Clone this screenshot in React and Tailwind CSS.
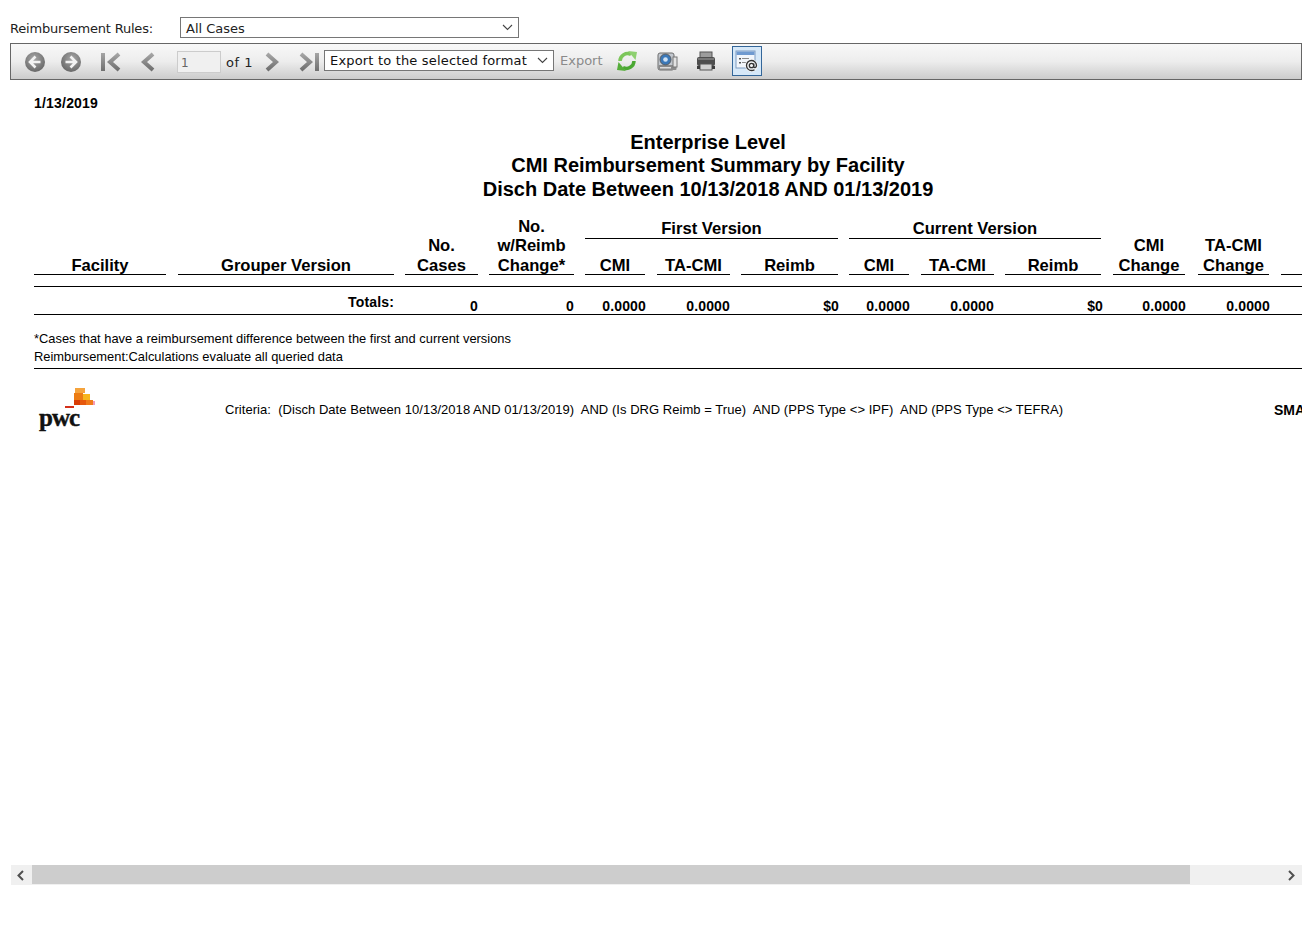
const Back = ({ flip }) => (
  <svg width="22" height="22" viewBox="0 0 22 22" className={flip ? "-scale-x-100" : ""}>
    <defs>
      <radialGradient id="cg" cx="0.45" cy="0.35" r="0.8">
        <stop offset="0" stopColor="#a8a8a8" />
        <stop offset="1" stopColor="#5a5a5a" />
      </radialGradient>
    </defs>
    <circle cx="11" cy="11" r="10" fill="url(#cg)" />
    <path d="M11.5 5.5 L6 11 L11.5 16.5 M6.5 11 H16.5" fill="none" stroke="#f2f2f2" strokeWidth="2.6" />
  </svg>
);

const Chev = ({ flip, bar, w = 22 }) => (
  <svg width={w} height="22" viewBox={`0 0 ${w} 22`} className={flip ? "-scale-x-100" : ""}>
    <defs>
      <linearGradient id="gg" x1="0" y1="0" x2="0" y2="1">
        <stop offset="0" stopColor="#a5a5a5" />
        <stop offset="1" stopColor="#6f6f6f" />
      </linearGradient>
    </defs>
    {bar && <rect x="0" y="2" width="4" height="18" fill="url(#gg)" />}
    <path d={bar ? "M18 3 L9 11 L18 19" : "M13 3 L4 11 L13 19"} fill="none" stroke="url(#gg)" strokeWidth="4" />
  </svg>
);

const Refresh = () => (
  <svg width="22" height="22" viewBox="0 0 22 22">
    <path d="M4 11 A7.5 7.5 0 0 1 15 4.5" fill="none" stroke="#7cc65a" strokeWidth="3.5" />
    <path d="M12 1 L21 2 L19.5 10 Z" fill="#8ed070" />
    <path d="M18 11 A7.5 7.5 0 0 1 7 17.5" fill="none" stroke="#4aa832" strokeWidth="3.5" />
    <path d="M10 21 L1 20 L2.5 12 Z" fill="#55ad3a" />
  </svg>
);

const Cam = () => (
  <svg width="22" height="22" viewBox="0 0 22 22">
    <rect x="2" y="3" width="16" height="17" rx="2" fill="#c3c8cf" stroke="#6d6d6d" />
    <rect x="2.5" y="15" width="18" height="5" rx="1" fill="#8a8a8a" />
    <rect x="17" y="7" width="4" height="10" fill="#e3e3e3" stroke="#777" />
    <circle cx="9.5" cy="9.5" r="5.5" fill="#3b78b8" stroke="#5b5b5b" />
    <circle cx="9.5" cy="9.5" r="2.3" fill="#cfe2f5" />
    <rect x="4" y="17" width="11" height="1.5" fill="#dddddd" />
  </svg>
);

const Printer = () => (
  <svg width="22" height="22" viewBox="0 0 22 22">
    <rect x="5" y="2" width="12" height="6" fill="#9c9c9c" stroke="#555" />
    <rect x="2" y="7" width="18" height="9" rx="2" fill="#4e4e4e" />
    <rect x="3" y="8" width="16" height="2" fill="#777" />
    <rect x="5" y="14" width="12" height="6" fill="#d2d2d2" stroke="#555" />
    <rect x="2" y="16" width="3" height="3" fill="#3e3e3e" />
    <rect x="17" y="16" width="3" height="3" fill="#3e3e3e" />
  </svg>
);

const Mail = () => (
  <svg width="24" height="24" viewBox="0 0 24 24">
    <rect x="1" y="2" width="19" height="17" fill="#f2f6fb" stroke="#7f9cc0" />
    <rect x="1.5" y="2.5" width="18" height="3.5" fill="#6f9ad0" />
    <rect x="4" y="9" width="2" height="1.5" fill="#555" />
    <rect x="7" y="9" width="7" height="1" fill="#8a8a8a" />
    <rect x="4" y="13" width="2" height="1.5" fill="#555" />
    <rect x="7" y="13" width="4" height="1" fill="#8a8a8a" />
    <circle cx="16.5" cy="16.5" r="6.5" fill="#f5f5f5" opacity="0.85" />
    <circle cx="16.5" cy="16.5" r="2.2" fill="none" stroke="#333" strokeWidth="1.3" />
    <path d="M18.7 14.5 V17.5 C18.7 19 21.5 19 21.5 16.5 C21.5 13 18.5 11.5 16.5 11.5 C13.5 11.5 11.5 14 11.5 16.5 C11.5 19.5 14 21.5 16.5 21.5 C17.7 21.5 18.7 21.2 19.5 20.7" fill="none" stroke="#333" strokeWidth="1.3" />
  </svg>
);

const Logo = () => (
  <div className="w-[60px] h-[46px] flex flex-col items-start">
    <svg width="60" height="23" viewBox="0 0 60 23" className="block">
      <rect x="36" y="0" width="10" height="5" fill="#f5a33c" />
      <rect x="35" y="5" width="9" height="7" fill="#ec7c12" />
      <rect x="44" y="6" width="7" height="6" fill="#f7b61c" />
      <rect x="35" y="12" width="6" height="5" fill="#d93c05" />
      <rect x="41" y="12" width="6" height="5" fill="#e6580d" />
      <rect x="47" y="12" width="7" height="5" fill="#f07a1a" />
      <rect x="54" y="13" width="2" height="4" fill="#f49ab8" />
      <rect x="26" y="18" width="9" height="2" fill="#d4301a" />
    </svg>
    <div className="font-['Liberation_Serif',serif] font-bold text-[25px] leading-[22px] tracking-[-1px] text-[#111] -mt-[4px] [-webkit-text-stroke:0.4px_#111]">pwc</div>
  </div>
);

const Head = ({ w, children, className = "" }) => (
  <div className={`${w} ${className} shrink-0 text-center border-b border-black leading-[19.5px]`}>
    <div className="-mb-[1px]">{children}</div>
  </div>
);

export default function App() {
  return (
    <div className="h-[937px] w-[1312px] overflow-hidden bg-white text-black font-['Liberation_Sans',Arial,sans-serif]">
      <div className="pl-[10px] pt-[17px] flex items-center h-[43px] pb-[5px] font-['DejaVu_Sans',Verdana,sans-serif] text-[13px] text-[#222]">
        <span className="w-[170px] tracking-[-0.2px] pt-[2px]">Reimbursement Rules:</span>
        <div className="w-[339px] h-[21px] border border-[#767676] bg-white flex items-center justify-between pl-[5px] pr-[5px]">
          <span className="pt-[2px]">All Cases</span>
          <svg width="11" height="7" viewBox="0 0 11 7"><path d="M1 1 L5.5 5.5 L10 1" fill="none" stroke="#444" strokeWidth="1.1" /></svg>
        </div>
      </div>

      <div className="ml-[10px] w-[1292px] h-[37px] border border-[#666] bg-gradient-to-b from-[#f8f8f8] via-[#ededed] to-[#cccccc] flex items-center pl-[13px] font-['DejaVu_Sans',Verdana,sans-serif] text-[13px]">
        <Back />
        <div className="w-[14px]" />
        <Back flip />
        <div className="w-[19px]" />
        <Chev bar />
        <div className="w-[17px]" />
        <Chev w={16} />
        <div className="w-[21px]" />
        <div className="w-[44px] h-[22px] border border-[#ccc] bg-[#f0f0f0] text-[#666] text-[12px] pl-[3px] pt-[2px] flex items-center">1</div>
        <span className="ml-[5px] w-[27px] text-[#222] mt-[2px] tracking-[0.5px]">of 1</span>
        <div className="w-[11px]" />
        <Chev flip w={16} />
        <div className="w-[17px]" />
        <Chev flip bar />
        <div className="w-[5px]" />
        <div className="w-[230px] h-[21px] -mt-[2px] border border-[#767676] bg-white flex items-center justify-between pl-[5px] pr-[5px] text-[#111] tracking-[0.18px]">
          <span>Export to the selected format</span>
          <svg width="11" height="7" viewBox="0 0 11 7"><path d="M1 1 L5.5 5.5 L10 1" fill="none" stroke="#444" strokeWidth="1.1" /></svg>
        </div>
        <span className="ml-[6px] w-[46px] text-[#8a8a8a] -mt-[2px]">Export</span>
        <div className="ml-[10px] -mt-[1px]"><Refresh /></div>
        <div className="ml-[18px] -mt-[1px]"><Cam /></div>
        <div className="ml-[17px] -mt-[1px]"><Printer /></div>
        <div className="ml-[15px] -mt-[2px] w-[30px] h-[30px] border border-[#336699] bg-[#d6e8f8] flex items-center justify-center"><Mail /></div>
      </div>

      <div className="ml-[10px] w-[1292px] h-[785px] overflow-hidden pl-[24px]">
        <div className="w-[1400px]">
          <div className="pt-[14px] text-[14px] font-bold leading-[18px] tracking-[0.2px]">1/13/2019</div>

          <div className="w-[1348px] mt-[18.5px] text-center text-[20px] font-bold leading-[23.5px]">
            <div>Enterprise Level</div>
            <div>CMI Reimbursement Summary by Facility</div>
            <div>Disch Date Between 10/13/2018 AND 01/13/2019</div>
          </div>

          <div className="flex items-end mt-[15.5px] text-[16.6px] font-bold">
            <Head w="w-[132px]">Facility</Head>
            <Head w="w-[216px]" className="ml-[12px]">Grouper Version</Head>
            <Head w="w-[73px]" className="ml-[11px]">No.<br />Cases</Head>
            <Head w="w-[85px]" className="ml-[11px]">No.<br />w/Reimb<br />Change*</Head>
            <div className="w-[253px] ml-[11px] shrink-0">
              <div className="text-center border-b border-black leading-[19px] mb-[16.5px]">First Version</div>
              <div className="flex">
                <Head w="w-[60px]">CMI</Head>
                <Head w="w-[73px]" className="ml-[12px]">TA-CMI</Head>
                <Head w="w-[97px]" className="ml-[11px]">Reimb</Head>
              </div>
            </div>
            <div className="w-[252px] ml-[11px] shrink-0">
              <div className="text-center border-b border-black leading-[19px] mb-[16.5px]">Current Version</div>
              <div className="flex">
                <Head w="w-[60px]">CMI</Head>
                <Head w="w-[73px]" className="ml-[12px]">TA-CMI</Head>
                <Head w="w-[96px]" className="ml-[11px]">Reimb</Head>
              </div>
            </div>
            <Head w="w-[72px]" className="ml-[12px]">CMI<br />Change</Head>
            <Head w="w-[71px]" className="ml-[13px]">TA-CMI<br />Change</Head>
            <Head w="w-[100px]" className="ml-[12px]">&nbsp;</Head>
          </div>

          <div className="mt-[11px] h-[29px] border-y border-black flex items-end text-[14px] font-bold leading-[16px] tracking-[0.15px]">
            <div className="w-[360px] text-right self-start pt-[7px] shrink-0">Totals:</div>
            <div className="w-[84px] text-right shrink-0">0</div>
            <div className="w-[96px] text-right shrink-0">0</div>
            <div className="w-[72px] text-right shrink-0">0.0000</div>
            <div className="w-[84px] text-right shrink-0">0.0000</div>
            <div className="w-[109px] text-right shrink-0">$0</div>
            <div className="w-[71px] text-right shrink-0">0.0000</div>
            <div className="w-[84px] text-right shrink-0">0.0000</div>
            <div className="w-[109px] text-right shrink-0">$0</div>
            <div className="w-[83px] text-right shrink-0">0.0000</div>
            <div className="w-[84px] text-right shrink-0">0.0000</div>
          </div>

          <div className="mt-[15px] text-[12.9px] leading-[18px] pb-[2px] border-b border-black">
            <div>*Cases that have a reimbursement difference between the first and current versions</div>
            <div>Reimbursement:Calculations evaluate all queried data</div>
          </div>

          <div className="flex items-start mt-[19px] text-[13px]">
            <div className="w-[191px] pl-[5px] shrink-0"><Logo /></div>
            <div className="pt-[14px] w-[1049px] shrink-0 whitespace-pre leading-[16px] tracking-[0.04px]">Criteria:  (Disch Date Between 10/13/2018 AND 01/13/2019)  AND (Is DRG Reimb = True)  AND (PPS Type {"<>"} IPF)  AND (PPS Type {"<>"} TEFRA)</div>
            <div className="pt-[14px] font-bold text-[14px] leading-[16px]">SMART</div>
          </div>
        </div>
      </div>

      <div className="ml-[11px] w-[1291px] h-[20px] bg-[#f0f0f0] flex items-center">
        <div className="w-[21px] h-[20px] pr-[2px] flex items-center justify-center shrink-0">
          <svg width="9" height="11" viewBox="0 0 9 11"><path d="M7 1 L2.5 5.5 L7 10" fill="none" stroke="#505050" strokeWidth="2" /></svg>
        </div>
        <div className="w-[1158px] h-[19px] self-start bg-[#cdcdcd]" />
        <div className="flex-1" />
        <div className="w-[21px] h-[20px] flex items-center justify-center shrink-0">
          <svg width="9" height="11" viewBox="0 0 9 11"><path d="M2 1 L6.5 5.5 L2 10" fill="none" stroke="#505050" strokeWidth="2" /></svg>
        </div>
      </div>
    </div>
  );
}
